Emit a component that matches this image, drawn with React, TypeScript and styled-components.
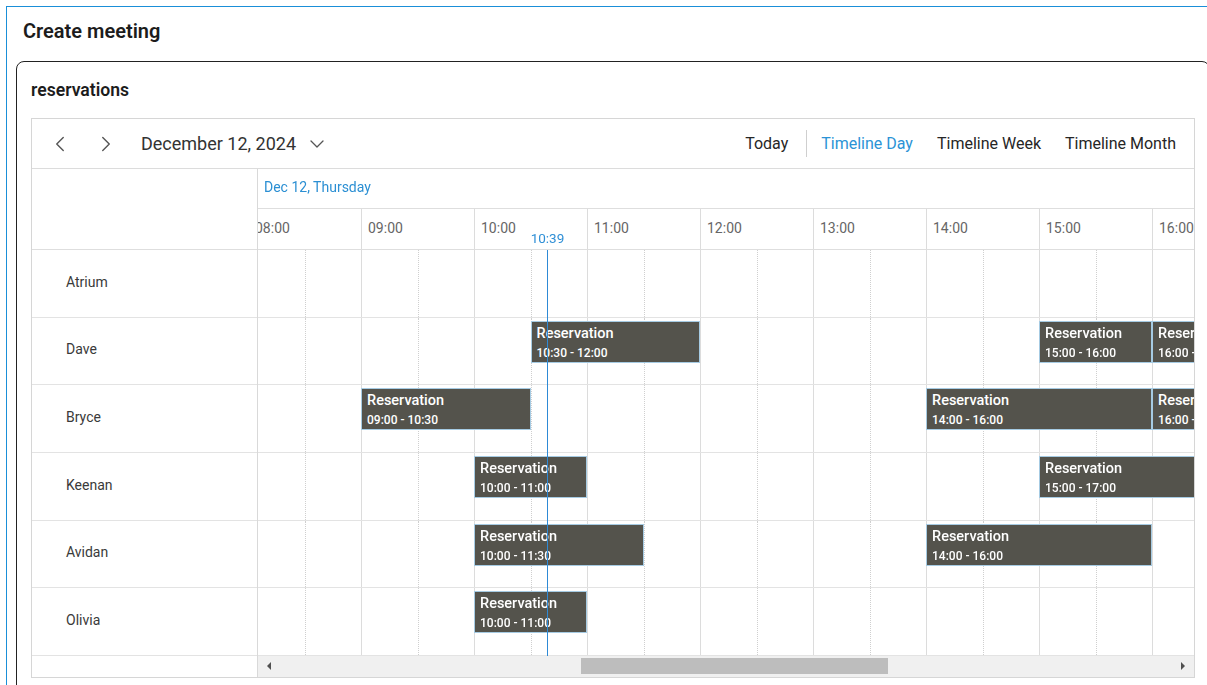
import React, { useLayoutEffect, useRef } from "react";
import styled, { createGlobalStyle } from "styled-components";
import { ChevronLeft, ChevronRight, ChevronDown } from "lucide-react";

// timeline geometry
const HOUR = 113;
const HOURS = 24;
const TRACK_WIDTH = HOUR * HOURS;
const SCROLL_LEFT = 914;
const ROWS_HEIGHT = 406;
const NOW = 10 + 39 / 60;
const ARROW_W = 22;

type Reservation = { start: number; end: number };
type Resource = { name: string; reservations: Reservation[] };

const resources: Resource[] = [
  { name: "Atrium", reservations: [] },
  {
    name: "Dave",
    reservations: [
      { start: 10.5, end: 12 },
      { start: 15, end: 16 },
      { start: 16, end: 17 },
    ],
  },
  {
    name: "Bryce",
    reservations: [
      { start: 9, end: 10.5 },
      { start: 14, end: 16 },
      { start: 16, end: 17.5 },
    ],
  },
  {
    name: "Keenan",
    reservations: [
      { start: 10, end: 11 },
      { start: 15, end: 17 },
    ],
  },
  {
    name: "Avidan",
    reservations: [
      { start: 10, end: 11.5 },
      { start: 14, end: 16 },
    ],
  },
  { name: "Olivia", reservations: [{ start: 10, end: 11 }] },
];

const pad = (n: number) => String(n).padStart(2, "0");
const fmt = (t: number) => `${pad(Math.floor(t))}:${pad(Math.round((t % 1) * 60))}`;

const GlobalStyle = createGlobalStyle`
  html, body {
    margin: 0;
    background: #fff;
    overflow: hidden;
  }
  body {
    font-family: Roboto, "Liberation Sans", sans-serif;
    color: #222;
  }
`;

const Frame = styled.div`
  margin: 6px 0 0 6px;
  width: 1214px;
  height: 700px;
  box-sizing: border-box;
  border: 1px solid #1a8fd8;
  padding: 12px 0 0 9px;
`;

const PageTitle = styled.h1`
  margin: 0 0 18px 7px;
  font-size: 20px;
  line-height: 24px;
  font-weight: 600;
  color: #1c1c1c;
`;

const Card = styled.section`
  width: 1194px;
  box-sizing: border-box;
  border: 1px solid #222;
  border-radius: 8px;
  padding: 18px 14px 14px;
`;

const CardTitle = styled.h2`
  margin: 0 0 18px;
  font-size: 17.6px;
  line-height: 20px;
  font-weight: 600;
  color: #1c1c1c;
`;

const Scheduler = styled.div`
  border: 1px solid #d6d6d6;
  background: #fff;
`;

const Toolbar = styled.div`
  display: flex;
  align-items: center;
  justify-content: space-between;
  height: 49px;
  border-bottom: 1px solid #dcdcdc;
  padding: 0 6px 0 12px;
`;

const NavGroup = styled.div`
  display: flex;
  align-items: center;
`;

const IconButton = styled.button`
  width: 32px;
  height: 32px;
  padding: 0;
  border: none;
  background: none;
  display: flex;
  align-items: center;
  justify-content: center;
  color: #555;

  & + & {
    margin-left: 14px;
  }
`;

const DateButton = styled.button`
  margin-left: 19px;
  padding: 0;
  border: none;
  background: none;
  display: flex;
  align-items: center;
  gap: 9px;
  font-family: inherit;
  font-size: 18px;
  color: #333;
`;

const ViewGroup = styled.div`
  display: flex;
  align-items: center;
`;

const ViewButton = styled.button<{ $active?: boolean }>`
  height: 32px;
  padding: 0 12px;
  border: none;
  background: none;
  font-family: inherit;
  font-size: 16px;
  color: ${(p) => (p.$active ? "#2b93d6" : "#262626")};
`;

const Separator = styled.span`
  width: 1px;
  height: 27px;
  background: #cfcfcf;
  margin: 0 2px 0 6px;
`;

const Body = styled.div`
  display: grid;
  grid-template-columns: 226px 1fr;
`;

const ResourceColumn = styled.div`
  display: flex;
  flex-direction: column;
  border-right: 1px solid #d9d9d9;
`;

const ResourceHeader = styled.div`
  height: 81px;
  box-sizing: border-box;
  border-bottom: 1px solid #dedede;
`;

const ResourceCell = styled.div`
  height: ${ROWS_HEIGHT / resources.length}px;
  box-sizing: border-box;
  border-bottom: 1px solid #e3e3e3;
  display: flex;
  align-items: center;
  padding: 0 0 3px 34px;
  font-size: 14px;
  color: #3a3a3a;
`;

const ScrollCorner = styled.div`
  height: 21px;
`;

const TimelineColumn = styled.div`
  min-width: 0;
  display: flex;
  flex-direction: column;
`;

const Viewport = styled.div`
  overflow: hidden;
`;

const Track = styled.div`
  width: ${TRACK_WIDTH}px;
  position: relative;
`;

const DateHeader = styled.div`
  height: 40px;
  box-sizing: border-box;
  border-bottom: 1px solid #dedede;
  padding-bottom: 4px;
  display: flex;
  align-items: center;
`;

const DateLabel = styled.span`
  position: sticky;
  left: 0;
  padding-left: 6px;
  font-size: 14px;
  color: #2b8fd3;
`;

const HourRow = styled.div`
  height: 41px;
  box-sizing: border-box;
  border-bottom: 1px solid #dedede;
  display: flex;
`;

const HourCell = styled.div`
  flex: none;
  width: ${HOUR}px;
  box-sizing: border-box;
  border-left: 1px solid #dcdcdc;
  padding: 0 0 2px 6px;
  display: flex;
  align-items: center;
  font-size: 14px;
  color: #666;
`;

const Lane = styled.div`
  position: relative;
  height: ${ROWS_HEIGHT / resources.length}px;
  box-sizing: border-box;
  border-bottom: 1px solid #e3e3e3;
  display: flex;
`;

const Slot = styled.div<{ $half?: boolean }>`
  flex: none;
  width: ${HOUR / 2}px;
  box-sizing: border-box;
  border-left: 1px ${(p) => (p.$half ? "dotted #cfcfcf" : "solid #dcdcdc")};
`;

const Event = styled.div`
  position: absolute;
  top: 3px;
  height: 42px;
  box-sizing: border-box;
  background: #54534c;
  border: 1px solid #a6cbe3;
  color: #fff;
  padding: 3px 5px;
  overflow: hidden;
  white-space: nowrap;
  z-index: 1;
`;

const EventTitle = styled.div`
  font-size: 14.5px;
  line-height: 18px;
  font-weight: 500;
`;

const EventTime = styled.div`
  margin-top: 2px;
  font-size: 12px;
  line-height: 16px;
  font-weight: 500;
`;

const NowLine = styled.div`
  position: absolute;
  top: 81px;
  left: ${Math.round(NOW * HOUR)}px;
  width: 1px;
  height: ${ROWS_HEIGHT}px;
  background: #2e8ad6;
  z-index: 3;
`;

const NowLabel = styled.span`
  position: absolute;
  top: 62px;
  left: ${NOW * HOUR}px;
  transform: translateX(-50%);
  font-size: 13.5px;
  line-height: 15px;
  color: #2f8fd6;
`;

const Scrollbar = styled.div`
  height: 21px;
  background: #f0f0f0;
  display: flex;
  align-items: center;
`;

const ScrollArrow = styled.span<{ $dir: "left" | "right" }>`
  flex: none;
  width: ${ARROW_W}px;
  height: 100%;
  display: flex;
  align-items: center;
  justify-content: center;

  &::before {
    content: "";
    border-top: 4px solid transparent;
    border-bottom: 4px solid transparent;
    ${(p) =>
      p.$dir === "left"
        ? "border-right: 4px solid #505050;"
        : "border-left: 4px solid #505050;"}
  }
`;

const ScrollTrack = styled.div`
  flex: 1;
  position: relative;
  height: 100%;
`;

const ScrollThumb = styled.div`
  position: absolute;
  top: 2px;
  height: 16px;
  background: #bdbdbd;
`;

function ResourceLane({ resource }: { resource: Resource }) {
  return (
    <Lane>
      {Array.from({ length: HOURS * 2 }, (_, i) => (
        <Slot key={i} $half={i % 2 === 1} />
      ))}
      {resource.reservations.map((r) => (
        <Event
          key={r.start}
          style={{ left: r.start * HOUR, width: (r.end - r.start) * HOUR }}
        >
          <EventTitle>Reservation</EventTitle>
          <EventTime>
            {fmt(r.start)} - {fmt(r.end)}
          </EventTime>
        </Event>
      ))}
    </Lane>
  );
}

function HScrollbar({ view }: { view: number }) {
  const trackLen = view - ARROW_W * 2;
  const thumbW = (view / TRACK_WIDTH) * trackLen;
  const thumbX = (SCROLL_LEFT / TRACK_WIDTH) * trackLen;
  return (
    <Scrollbar>
      <ScrollArrow $dir="left" />
      <ScrollTrack>
        <ScrollThumb style={{ left: thumbX, width: thumbW }} />
      </ScrollTrack>
      <ScrollArrow $dir="right" />
    </Scrollbar>
  );
}

export default function App() {
  const viewportRef = useRef<HTMLDivElement>(null);

  useLayoutEffect(() => {
    if (viewportRef.current) viewportRef.current.scrollLeft = SCROLL_LEFT;
  }, []);

  return (
    <>
      <GlobalStyle />
      <Frame>
        <PageTitle>Create meeting</PageTitle>
        <Card>
          <CardTitle>reservations</CardTitle>
          <Scheduler>
            <Toolbar>
              <NavGroup>
                <IconButton aria-label="Previous">
                  <ChevronLeft size={26} strokeWidth={1.3} />
                </IconButton>
                <IconButton aria-label="Next">
                  <ChevronRight size={26} strokeWidth={1.3} />
                </IconButton>
                <DateButton>
                  December 12, 2024
                  <ChevronDown size={24} strokeWidth={1.3} color="#555" />
                </DateButton>
              </NavGroup>
              <ViewGroup>
                <ViewButton>Today</ViewButton>
                <Separator />
                <ViewButton $active>Timeline Day</ViewButton>
                <ViewButton>Timeline Week</ViewButton>
                <ViewButton>Timeline Month</ViewButton>
              </ViewGroup>
            </Toolbar>
            <Body>
              <ResourceColumn>
                <ResourceHeader />
                {resources.map((r) => (
                  <ResourceCell key={r.name}>{r.name}</ResourceCell>
                ))}
                <ScrollCorner />
              </ResourceColumn>
              <TimelineColumn>
                <Viewport ref={viewportRef}>
                  <Track>
                    <DateHeader>
                      <DateLabel>Dec 12, Thursday</DateLabel>
                    </DateHeader>
                    <HourRow>
                      {Array.from({ length: HOURS }, (_, h) => (
                        <HourCell key={h}>{fmt(h)}</HourCell>
                      ))}
                    </HourRow>
                    {resources.map((r) => (
                      <ResourceLane key={r.name} resource={r} />
                    ))}
                    <NowLabel>{fmt(NOW)}</NowLabel>
                    <NowLine />
                  </Track>
                </Viewport>
                <HScrollbar view={936} />
              </TimelineColumn>
            </Body>
          </Scheduler>
        </Card>
      </Frame>
    </>
  );
}
